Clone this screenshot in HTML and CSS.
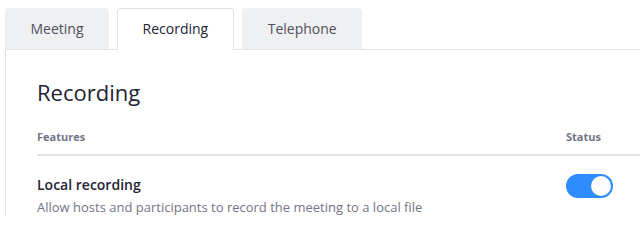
FILE: index.html
```html
<!DOCTYPE html>
<html lang="en">
<head>
<meta charset="utf-8">
<title>Settings - Recording</title>
<link rel="stylesheet" href="styles.css">
</head>
<body>
  <div class="page">
    <nav class="tabs">
      <a class="tab">Meeting</a>
      <a class="tab tab-active">Recording</a>
      <a class="tab">Telephone</a>
    </nav>
    <section class="panel">
      <h1 class="panel-title">Recording</h1>
      <div class="table">
        <div class="table-head">
          <div class="col-feature">Features</div>
          <div class="col-status">Status</div>
        </div>
        <div class="table-row">
          <div class="col-feature">
            <div class="feature-name">Local recording</div>
            <div class="feature-desc">Allow hosts and participants to record the meeting to a local file</div>
          </div>
          <div class="col-status">
            <span class="toggle toggle-on"><span class="toggle-knob"></span></span>
          </div>
        </div>
      </div>
    </section>
  </div>
</body>
</html>
```

FILE: styles.css
```css
html, body {
  margin: 0;
  padding: 0;
  background: #ffffff;
  overflow: hidden;
}

body {
  font-family: "Open Sans", "DejaVu Sans", sans-serif;
  color: #232333;
}

.page {
  padding: 8px 0 0 5px;
}

.tabs {
  display: flex;
  gap: 8px;
  height: 41px;
  position: relative;
  z-index: 1;
}

.tab {
  box-sizing: border-box;
  height: 41px;
  padding: 0 24.5px;
  line-height: 40px;
  font-size: 14px;
  color: #4f4f5c;
  background: #eff0f2;
  border-radius: 4px 4px 0 0;
  border: 1px solid #eff0f2;
  border-bottom: none;
  white-space: nowrap;
}

.tab-active {
  background: #ffffff;
  color: #232333;
  border-color: #e2e2e6;
  height: 42px;
}

.tab:nth-child(3) {
  margin-left: 0.5px;
}

.panel {
  border-top: 1px solid #e2e2e6;
  border-left: 1px solid #e2e2e6;
  padding: 26px 0 0 31px;
}

.panel-title {
  margin: 0;
  font-size: 22px;
  line-height: 32px;
  font-weight: 400;
  color: #232333;
}

.table {
  margin-top: 21px;
}

.table-head {
  display: flex;
  font-size: 11px;
  line-height: 16px;
  font-weight: 700;
  color: #747487;
  padding-bottom: 9px;
  border-bottom: 2px solid #e4e4e8;
}

.col-feature {
  flex: 1;
}

.col-status {
  width: 74px;
  flex: none;
}

.table-row {
  display: flex;
  align-items: flex-start;
  padding-top: 19px;
}

.feature-name {
  font-size: 14px;
  line-height: 20px;
  font-weight: 600;
  color: #232333;
}

.feature-desc {
  margin-top: 3px;
  font-size: 13px;
  line-height: 18px;
  color: #747487;
}

.table-row .col-status {
  padding-left: 1px;
}

.toggle {
  display: block;
  box-sizing: border-box;
  width: 47px;
  height: 24px;
  border-radius: 12px;
  background: #c6c6cc;
  padding: 2px;
  margin-top: -1px;
}

.toggle-on {
  background: #2d8cff;
}

.toggle-knob {
  display: block;
  width: 20px;
  height: 20px;
  border-radius: 50%;
  background: #fcfcfc;
  margin-left: 23px;
}
```
